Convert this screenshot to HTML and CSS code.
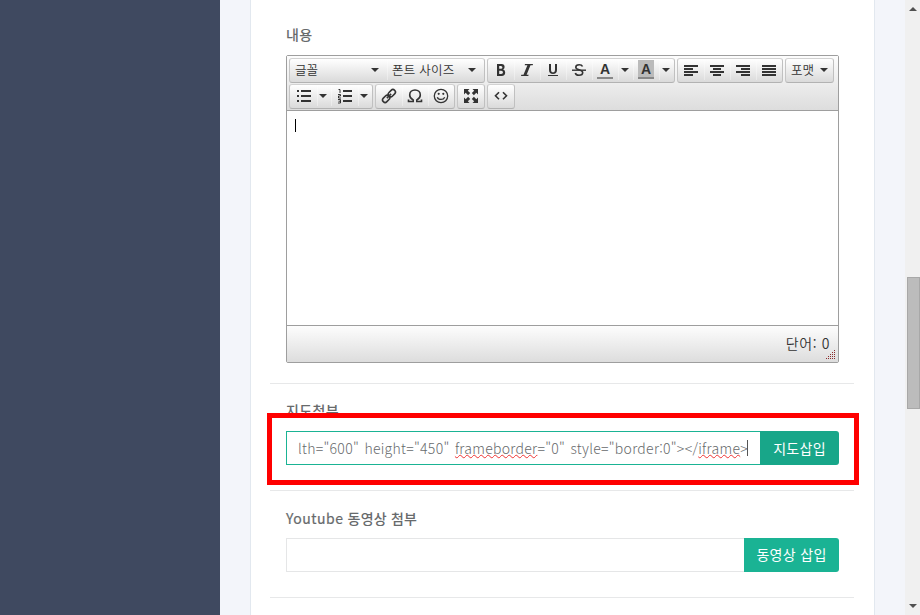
FILE: index.html
```html
<!DOCTYPE html>
<html lang="ko">
<head>
<meta charset="utf-8">
<title>내용</title>
<link rel="stylesheet" href="styles.css">
</head>
<body>
<div class="app">
  <aside class="sidebar"></aside>
  <main class="content">
    <div class="panel">
      <section class="group group-editor">
        <div class="label"><span>내용</span></div>
        <div class="editor">
          <div class="toolbar">
            <div class="bar">
              <div class="btns">
                <span class="btn font"><span>글꼴</span><i class="caret"></i></span>
                <span class="btn size"><span>폰트 사이즈</span><i class="caret"></i></span>
              </div>
              <div class="btns">
                <span class="btn"><svg width="16" height="16" viewBox="0 0 16 16"><path fill-rule="evenodd" d="M4 2h4.600q3 .1 3 3 0 1.800-1.400 2.500Q12.200 8.200 12.200 10.400q0 3.200-3.500 3.600H4zM6.200 4v2.800h1.700q1.500-.1 1.500-1.400T7.900 4zM6.200 8.700V12h2q1.800-.1 1.800-1.700T8.200 8.700z"/></svg></span>
                <span class="btn"><svg width="16" height="16" viewBox="0 0 16 16"><path d="M6 2h8l-.3 1.300h-2.200L7.600 12.700h2L9.300 14H2l.3-1.300h2.200L8.400 3.300H5.700z"/></svg></span>
                <span class="btn"><svg width="16" height="16" viewBox="0 0 16 16"><path d="M3 13h10v1H3zM4 2h2v5.500c0 2 .7 2.800 2 2.800s2-.8 2-2.800V2h2v6c0 2.700-1.500 4-4 4s-4-1.300-4-4z"/></svg></span>
                <span class="btn"><svg width="16" height="16" viewBox="0 0 16 16"><path class="line" d="M11.500 4.500C11 3.200 9.900 2.700 8.200 2.700 6 2.700 4.800 3.700 4.800 5.200c0 3.300 6.900 1.800 6.900 5.400 0 1.600-1.400 2.700-3.700 2.700-2.100 0-3.300-.8-3.700-2.300"/><path d="M1 7.500h14v1.400H1z"/></svg></span>
                <span class="btn color"><b class="fore">A</b></span><span class="btn drop"><i class="caret"></i></span>
                <span class="btn color"><b class="back">A</b></span><span class="btn drop"><i class="caret"></i></span>
              </div>
              <div class="btns">
                <span class="btn"><svg width="16" height="16" viewBox="0 0 16 16"><path d="M1 3h14v2H1zM1 6h9v2H1zM1 9h14v2H1zM1 12h9v2H1z"/></svg></span>
                <span class="btn"><svg width="16" height="16" viewBox="0 0 16 16"><path d="M1 3h14v2H1zM4 6h8v2H4zM1 9h14v2H1zM4 12h8v2H4z"/></svg></span>
                <span class="btn"><svg width="16" height="16" viewBox="0 0 16 16"><path d="M1 3h14v2H1zM6 6h9v2H6zM1 9h14v2H1zM6 12h9v2H6z"/></svg></span>
                <span class="btn"><svg width="16" height="16" viewBox="0 0 16 16"><path d="M1 3h14v2H1zM1 6h14v2H1zM1 9h14v2H1zM1 12h14v2H1z"/></svg></span>
              </div>
              <div class="btns">
                <span class="btn format"><span>포맷</span><i class="caret"></i></span>
              </div>
            </div>
            <div class="bar">
              <div class="btns">
                <span class="btn list"><svg width="16" height="16" viewBox="0 0 16 16"><path d="M1 2h2v2H1zM1 7h2v2H1zM1 12h2v2H1zM5 2h10v2H5zM5 7h10v2H5zM5 12h10v2H5z"/></svg></span><span class="btn drop"><i class="caret"></i></span>
                <span class="btn list"><svg width="16" height="16" viewBox="0 0 16 16"><path d="M6 2h9v2H6zM6 7h9v2H6zM6 12h9v2H6z"/><path class="thin" d="M1.500 1.500h1.500v3.500M1 6.500h2.500v1.500h-2v2H4M1 11.500h2.500v3.500H1M1.500 13.200h2"/></svg></span><span class="btn drop"><i class="caret"></i></span>
              </div>
              <div class="btns">
                <span class="btn"><svg width="16" height="16" viewBox="0 0 16 16"><g class="line" transform="rotate(-45 8 8)"><rect x="0" y="5.500" width="8" height="5" rx="2.500"/><rect x="8" y="5.500" width="8" height="5" rx="2.500"/><path d="M5 8h6"/></g></svg></span>
                <span class="btn"><svg width="16" height="16" viewBox="0 0 16 16"><path class="line" d="M1.500 11.500v2h4.700v-1.600C3.800 10.800 2.700 9 2.700 7 2.700 4.100 4.900 2 8 2s5.300 2.100 5.300 5c0 2-1.100 3.800-3.500 4.900v1.600h4.700v-2"/></svg></span>
                <span class="btn"><svg width="16" height="16" viewBox="0 0 16 16"><circle class="smile" cx="8" cy="8" r="6.700"/><path class="smile" d="M4.300 9.200c1.200 3 6.200 3 7.400 0"/><circle cx="5.700" cy="5.800" r="1.100"/><circle cx="10.300" cy="5.800" r="1.100"/></svg></span>
              </div>
              <div class="btns">
                <span class="btn"><svg width="16" height="16" viewBox="0 0 16 16"><path d="M1 1h5.500L4.800 2.700 7.200 5.100 5.100 7.200 2.700 4.800 1 6.500zM15 1v5.500l-1.700-1.700-2.400 2.400-2.100-2.100 2.400-2.400L9.500 1zM1 15V9.500l1.700 1.700 2.400-2.400 2.100 2.100-2.400 2.400L6.500 15zM15 15H9.500l1.700-1.700-2.400-2.400 2.100-2.100 2.400 2.400L15 9.500z"/></svg></span>
              </div>
              <div class="btns">
                <span class="btn"><svg width="16" height="16" viewBox="0 0 16 16"><path class="line" d="M6 4.300 2.500 7.800 6 11.300M10 4.300l3.500 3.500-3.500 3.500"/></svg></span>
              </div>
            </div>
          </div>
          <div class="body"><i class="cursor"></i></div>
          <div class="status"><span>단어: 0</span>
            <svg class="grip" width="10" height="9" viewBox="0 0 10 9"><path d="M8 .5h2M6 2.500h4M4 4.500h6M2 6.500h8M0 8.500h10"/></svg>
          </div>
        </div>
      </section>
      <section class="group">
        <div class="label"><span>지도첨부</span></div>
        <div class="field focus">
          <div class="input"><span class="code">lth="600" height="450" <u>frameborder</u>="0" style="border:0"&gt;&lt;/<u>iframe</u>&gt;</span><i class="cursor small"></i></div>
          <div class="submit map"><span>지도삽입</span></div>
        </div>
        <div class="highlight"></div>
      </section>
      <section class="group group-video">
        <div class="label"><span class="yt"><span class="latin">Youtube</span> 동영상 첨부</span></div>
        <div class="field">
          <div class="input"></div>
          <div class="submit video"><span>동영상 삽입</span></div>
        </div>
      </section>
    </div>
  </main>
  <div class="scroll"><i class="arrow up"></i><div class="thumb"></div><i class="arrow down"></i></div>
</div>
</body>
</html>
```
FILE: styles.css
```css
* { box-sizing: border-box; }
body {
  margin: 0;
  height: 615px;
  overflow: hidden;
  font-family: "Open Sans", "Noto Sans CJK KR", sans-serif;
  font-size: 14px;
  color: #676a6c;
}
.app { display: flex; height: 615px; }
.sidebar { width: 220px; background: #3f4960; }
.content { width: 685px; padding: 0 30px; background: #f3f5fa; }
.panel {
  width: 625px;
  height: 615px;
  padding: 0 20px 0 19px;
  background: #fff;
  border: solid #e2e8ef;
  border-width: 0 1px;
}
.group {
  position: relative;
  height: 107px;
  padding: 17px 15px 0 16px;
  border-bottom: 1px solid #e7e8e9;
}
.group-editor { height: 384px; padding-top: 25px; }
.label {
  height: 30px;
  line-height: 18px;
  font-family: "Noto Sans CJK KR", sans-serif;
  font-weight: 500;
  white-space: nowrap;
}
.label span { letter-spacing: 0.4px; }
.group-video .label { line-height: 20px; }
.label .yt { letter-spacing: 0.2px; }
.label .latin { font-weight: 400; letter-spacing: 0.5px; -webkit-text-stroke: 0.2px; }

.editor {
  width: 553px;
  height: 308px;
  border: 1px solid #9e9e9e;
  border-radius: 2px;
  font-family: "Noto Sans CJK KR", sans-serif;
  color: #333;
}
.toolbar {
  height: 55px;
  padding: 2px;
  border-bottom: 1px solid #9e9e9e;
  background: linear-gradient(#fdfdfd, #ddd);
}
.bar { display: flex; gap: 2px; height: 26px; }
.btns {
  display: flex;
  height: 25px;
  padding-bottom: 2px;
  border: 1px solid #c4c4c4;
  border-color: #d2d2d2 #c0c0c0 #b2b2b2 #c6c6c6;
  border-radius: 3px;
  background: linear-gradient(#fff, #dadada);
}
.btn {
  display: flex;
  width: 26px;
  align-items: center;
  justify-content: center;
  font-size: 12.5px;
  font-weight: 350;
  line-height: 20px;
  white-space: nowrap;
}
.btn + .btn { box-shadow: inset 1px 0 rgba(255, 255, 255, .35); }
.btn svg { display: block; fill: #333; }
.btn .line { fill: none; stroke: #333; stroke-width: 1.6; }
.btn .thin { fill: none; stroke: #333; stroke-width: 1; }
.btn .smile { fill: none; stroke: #333; stroke-width: 1.3; }
.caret { border: 4px solid transparent; border-top-color: #333; border-bottom: 0; }
.font, .size, .format { justify-content: space-between; }
.font { width: 97px; padding: 0 8px 0 5px; }
.size { width: 97px; padding: 0 8px 0 5px; }
.size span { letter-spacing: 0.25px; }
.format { width: 47px; padding: 0 5px; }
.color { width: 26px; }
.drop { width: 15px; padding-right: 1px; }
.list { width: 27px; padding-left: 1px; }
.list + .drop { width: 14px; padding-right: 2px; }
.color b {
  width: 16px;
  height: 19px;
  border-bottom: 2px solid #888;
  font: bold 14px/19px "Liberation Sans", sans-serif;
  text-align: center;
}
.color .back { background: #bbb; }
.body { height: 214px; padding: 8px; }
.cursor { display: block; width: 1px; height: 13px; background: #000; }
.status {
  position: relative;
  height: 37px;
  padding: 7px 8px 0;
  border-top: 1px solid #9e9e9e;
  background: linear-gradient(#fdfdfd, #ddd);
  font-size: 14px;
  font-weight: 350;
  line-height: 20px;
  letter-spacing: 0.6px;
  text-align: right;
}
.grip { position: absolute; right: 2px; bottom: 3px; stroke: #8c2c2c; stroke-dasharray: 1 1; }

.field { display: flex; width: 553px; height: 34px; }
.input {
  display: flex;
  flex: 1;
  min-width: 0;
  align-items: center;
  padding-left: 11px;
  border: 1px solid #e5e6e7;
  border-right: 0;
}
.focus .input { border-color: #1ab394; }
.code {
  font: 300 14px/20px "Noto Sans CJK KR", sans-serif;
  letter-spacing: 0.28px;
  word-spacing: 1.2px;
  white-space: nowrap;
}
.code u { text-decoration: underline wavy #e33 1px; text-underline-offset: 0; }
.small { height: 16px; margin-left: -1px; background: #555; }
.submit {
  display: flex;
  align-items: center;
  justify-content: center;
  padding-bottom: 1px;
  border-radius: 0 3px 3px 0;
  background: #1ab394;
  color: #fff;
  font-family: "Noto Sans CJK KR", sans-serif;
  letter-spacing: 0.3px;
  white-space: nowrap;
}
.map { width: 79px; background: #18a689; }
.video { width: 95px; padding-bottom: 2px; }
.highlight {
  position: absolute;
  left: -3px;
  top: 29px;
  width: 592px;
  height: 72px;
  border: 5px solid #f00;
}
.scroll {
  display: flex;
  width: 15px;
  flex-direction: column;
  align-items: flex-end;
  background: #f0f0f0;
}
.arrow { margin-right: 3px; border: 4px solid transparent; }
.up { margin-top: 7px; border-top: 0; border-bottom-color: #505050; }
.down { margin-top: 195px; border-bottom: 0; border-top-color: #505050; }
.thumb {
  width: 13px;
  height: 132px;
  margin-top: 266px;
  border: 1px solid #a8a8a8;
  background: #bcbcbc;
}
```
